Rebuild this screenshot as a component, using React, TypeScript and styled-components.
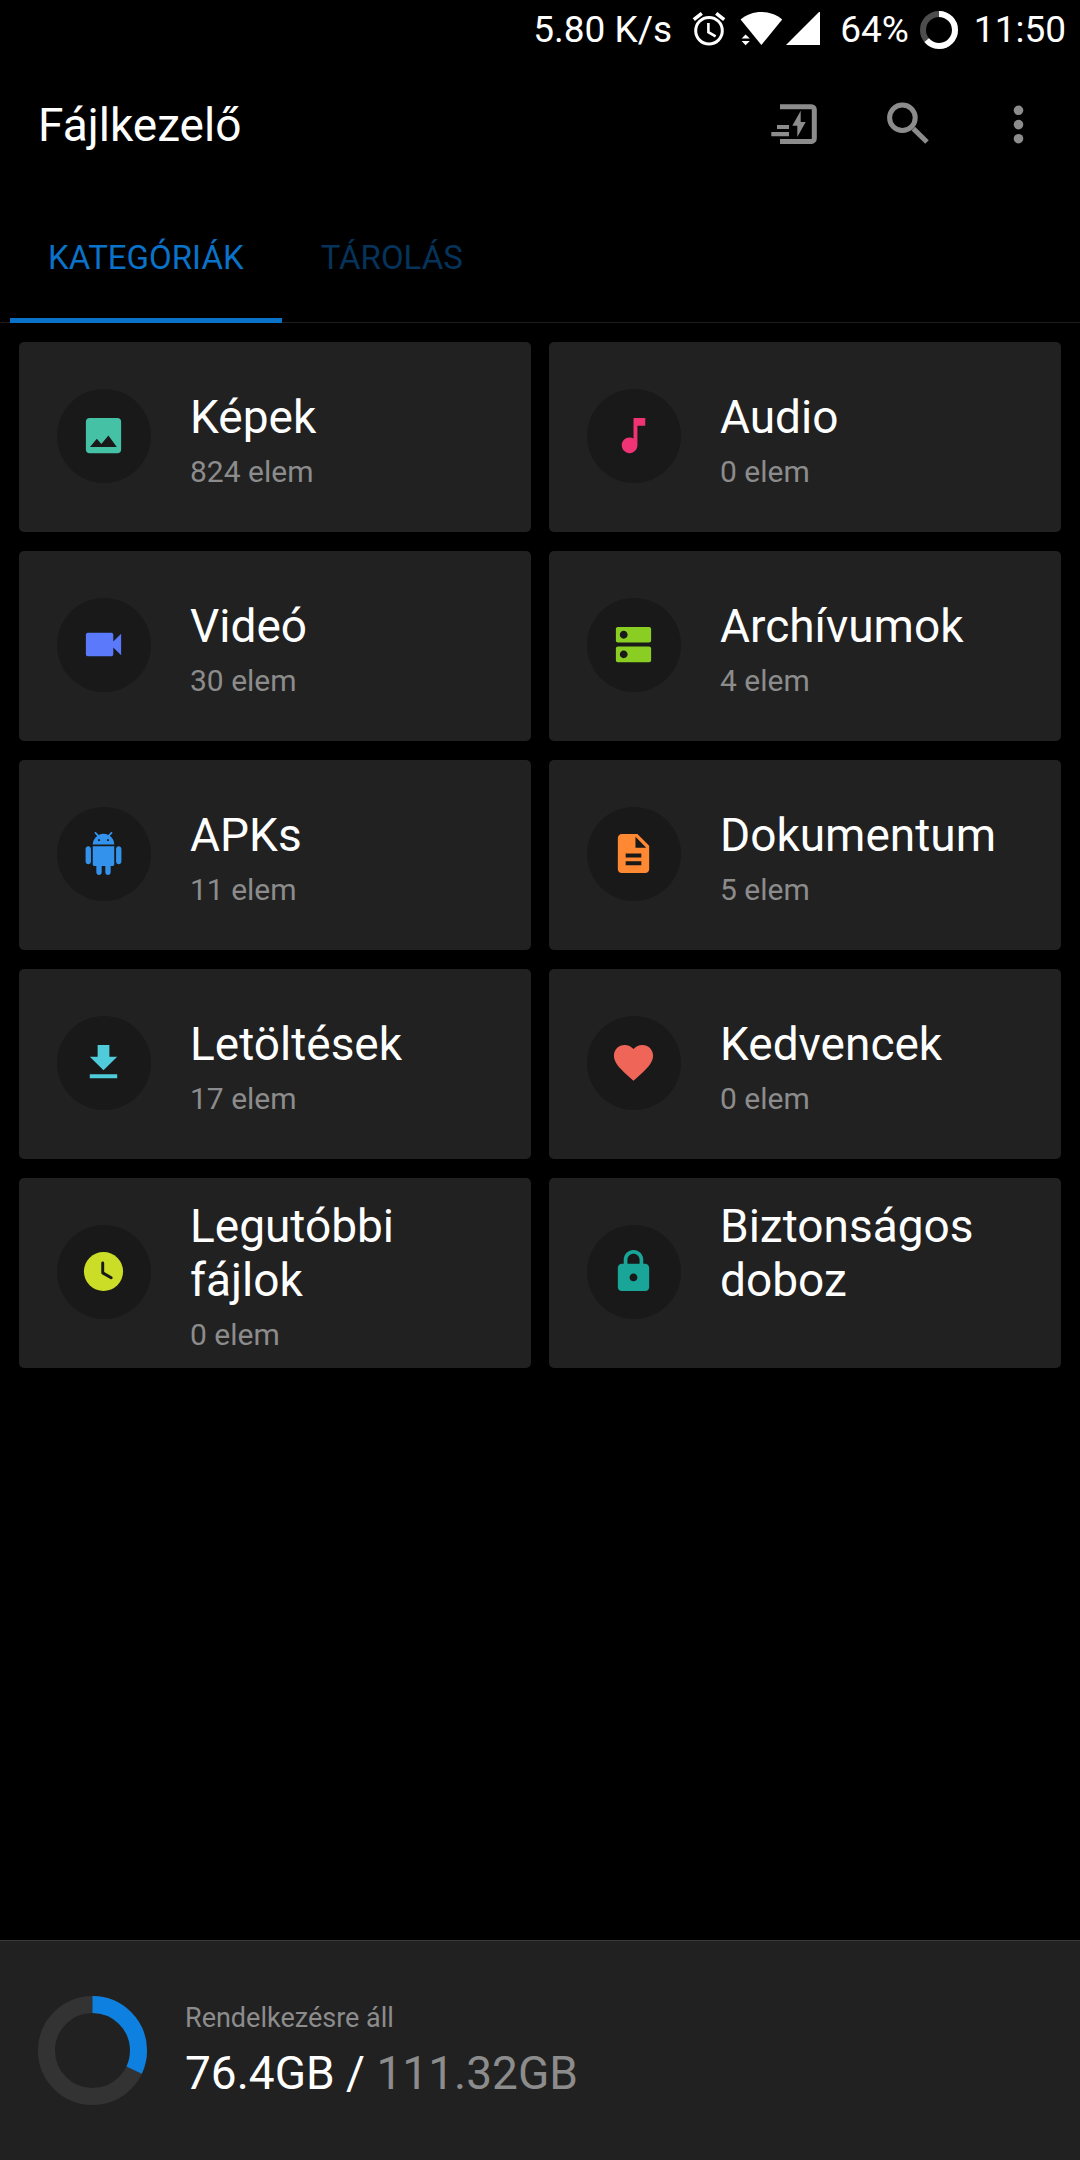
import React, { useState } from 'react';
import styled, { createGlobalStyle } from 'styled-components';

const GlobalStyle = createGlobalStyle`
  *, *::before, *::after { box-sizing: border-box; }
  html, body { margin: 0; background: #000; }
  body, button { font-family: Roboto, "Noto Sans", sans-serif; }
  button { margin: 0; padding: 0; border: 0; background: none; color: inherit; cursor: pointer; }
  svg { display: block; flex: none; }
`;

const Page = styled.div`
  display: flex;
  flex-direction: column;
  min-height: 100vh;
  background: #000;
  color: #fff;
`;

const StatusBar = styled.div`
  display: flex;
  align-items: center;
  justify-content: flex-end;
  height: 60px;
  padding-right: 14px;
  font-size: 37px;
  line-height: 44px;
`;

const StatusGroup = styled.div<{ $gap: number; $before: number }>`
  display: flex;
  align-items: center;
  gap: ${(p) => p.$gap}px;
  margin-left: ${(p) => p.$before}px;
`;

const Header = styled.header`
  display: flex;
  align-items: center;
  justify-content: space-between;
  height: 133px;
  padding: 0 5px 3px 38px;
`;

const Title = styled.h1`
  margin: 0;
  font-size: 46px;
  font-weight: 400;
  line-height: 54px;
`;

const Actions = styled.div`
  display: flex;
`;

const ActionButton = styled.button`
  display: flex;
  align-items: center;
  justify-content: center;
  width: 112px;
  height: 112px;
  color: #8c8c8c;
`;

const Tabs = styled.div`
  display: flex;
  gap: 1px;
  padding-left: 10px;
  box-shadow: inset 0 -1px #1c1c1c;
`;

const Tab = styled.button<{ $active: boolean }>`
  height: 130px;
  padding: 5px 38px 0;
  border-bottom: 5px solid ${(p) => (p.$active ? '#0a72c8' : 'transparent')};
  color: ${(p) => (p.$active ? '#0a72c8' : '#05335a')};
  font-size: 33px;
  line-height: 38px;
  text-transform: uppercase;
`;

const Grid = styled.main`
  display: grid;
  grid-template-columns: repeat(2, minmax(0, 1fr));
  gap: 19px 18px;
  padding: 19px;
`;

const Card = styled.button`
  display: flex;
  align-items: center;
  gap: 39px;
  min-height: 190px;
  padding: 0 38px;
  border-radius: 5px;
  background: #212121;
  text-align: left;
`;

const IconDisc = styled.span<{ $color: string }>`
  display: flex;
  flex: none;
  align-items: center;
  justify-content: center;
  width: 94px;
  height: 94px;
  margin-bottom: 2px;
  padding: 0 1px 1px 0;
  border-radius: 50%;
  background: #191919;
  color: ${(p) => p.$color};
`;

const CardText = styled.span`
  display: flex;
  flex-direction: column;
  gap: 12px;
  min-width: 0;
  padding-top: 4px;
`;

const CardTitle = styled.span`
  font-size: 46px;
  line-height: 54px;
`;

const CardCount = styled.span`
  min-height: 32px;
  color: #8c8c8c;
  font-size: 30px;
  line-height: 32px;
`;

const Storage = styled.footer`
  display: flex;
  align-items: center;
  gap: 38px;
  height: 220px;
  margin-top: auto;
  padding: 0 38px;
  border-top: 1px solid #3a3a3a;
  background: #212121;
`;

const StorageText = styled.div`
  display: flex;
  flex-direction: column;
  gap: 12px;
`;

const StorageLabel = styled.span`
  color: #8c8c8c;
  font-size: 27px;
  line-height: 32px;
`;

const StorageValue = styled.span`
  font-size: 46px;
  line-height: 54px;
`;

const Muted = styled.span`
  color: #8c8c8c;
`;

const AlarmIcon = () => (
  <svg width="34" height="36" viewBox="0 0 34 36" fill="none" stroke="#fff" strokeWidth="3" aria-hidden="true">
    <circle cx="17" cy="18.7" r="13.3" />
    <path d="M1.8 7.6L9.8 1.4M24.2 1.4l8 6.2" strokeWidth="3.6" />
    <path d="M16.4 11v9.2l7.2 4.2" strokeWidth="2.6" />
  </svg>
);

const WifiIcon = () => (
  <svg width="43" height="36" viewBox="0 0 43 36" fill="#fff" aria-hidden="true">
    <path d="M.6 7.4C6.4 2.6 13.500 0 21.400 0s15 2.600 20.800 7.400L21.400 33z" />
    <path d="M5.600 22.600l4.200 4H1.600zM1.600 29h8.200l-4.200 4.300z" />
  </svg>
);

const SignalIcon = () => (
  <svg width="34" height="36" viewBox="0 0 34 36" fill="#fff" aria-hidden="true">
    <path d="M34 -1V33H0z" />
  </svg>
);

/** Ring whose coloured arc starts at twelve o'clock and runs clockwise. */
function Ring(props: { size: number; stroke: number; value: number; color: string; track: string }) {
  const { size, stroke, value, color, track } = props;
  const c = size / 2;
  const r = (size - stroke) / 2;
  return (
    <svg width={size} height={size} viewBox={`0 0 ${size} ${size}`} fill="none" strokeWidth={stroke} aria-hidden="true">
      <circle cx={c} cy={c} r={r} stroke={track} />
      <circle
        cx={c}
        cy={c}
        r={r}
        stroke={color}
        pathLength={100}
        strokeDasharray={`${value} 100`}
        transform={`rotate(-90 ${c} ${c})`}
      />
    </svg>
  );
}

const TransferIcon = () => (
  <svg width="48" height="48" viewBox="0 1 48 48" fill="currentColor" aria-hidden="true">
    <path d="M9 6.800h31.500a2.800 2.800 0 0 1 2.800 2.800v29a2.800 2.800 0 0 1-2.800 2.800H9" fill="none" stroke="currentColor" strokeWidth="5" />
    <path d="M6 25h12v4H6zM.3 32H18v4.300H.3zM29.700 10.700V22h5l-8.400 15V25.700h-5z" />
  </svg>
);

const SearchIcon = () => (
  <svg width="48" height="48" viewBox="0 1 48 48" fill="none" stroke="currentColor" strokeWidth="5" aria-hidden="true">
    <circle cx="19.400" cy="17.700" r="12.800" />
    <path d="M30.300 28.600L44 42" />
  </svg>
);

const MoreIcon = () => (
  <svg width="48" height="48" viewBox="0 1 48 48" fill="currentColor" aria-hidden="true">
    <circle cx="23.500" cy="10.300" r="4.800" />
    <circle cx="23.500" cy="24.600" r="4.800" />
    <circle cx="23.500" cy="38.700" r="4.800" />
  </svg>
);

const ClockGlyph = () => (
  <>
    <circle cx="12" cy="12" r="10" />
    <path d="M11.600 7.600v5.100l4.300 2.500" fill="none" stroke="#191919" strokeWidth="1.500" strokeLinecap="round" strokeLinejoin="round" />
  </>
);

type Category = {
  title: string;
  count: string;
  color: string;
  size?: number;
  glyph: React.ReactNode;
};

const categories: Category[] = [
  {
    title: 'Képek',
    count: '824 elem',
    color: '#45c2a6',
    glyph: <path fillRule="evenodd" d="M5 3h14a2 2 0 0 1 2 2v14a2 2 0 0 1-2 2H5a2 2 0 0 1-2-2V5a2 2 0 0 1 2-2zM5.100 17.900h13.700L14.500 12l-3.600 4.400-2.300-2.800z" />,
  },
  {
    title: 'Audio',
    count: '0 elem',
    color: '#f03375',
    glyph: <path d="M12 3v10.550c-.59-.34-1.270-.55-2-.55-2.210 0-4 1.790-4 4s1.790 4 4 4 4-1.790 4-4V7h4V3h-6z" />,
  },
  {
    title: 'Videó',
    count: '30 elem',
    color: '#5a79fb',
    glyph: <path d="M17 10.500V7c0-.55-.45-1-1-1H4c-.55 0-1 .45-1 1v10c0 .55.45 1 1 1h12c.55 0 1-.45 1-1v-3.500l4 4v-11l-4 4z" />,
  },
  {
    title: 'Archívumok',
    count: '4 elem',
    color: '#8ace24',
    glyph: <path d="M20 13H4c-.55 0-1 .45-1 1v6c0 .55.45 1 1 1h16c.55 0 1-.45 1-1v-6c0-.55-.45-1-1-1zM7 19c-1.100 0-2-.9-2-2s.9-2 2-2 2 .9 2 2-.9 2-2 2zM20 3H4c-.55 0-1 .45-1 1v6c0 .55.45 1 1 1h16c.55 0 1-.45 1-1V4c0-.55-.45-1-1-1zM7 9c-1.100 0-2-.9-2-2s.9-2 2-2 2 .9 2 2-.9 2-2 2z" />,
  },
  {
    title: 'APKs',
    count: '11 elem',
    color: '#3292ec',
    size: 43,
    glyph: <path d="M6 18c0 .55.45 1 1 1h1v3.500c0 .83.67 1.500 1.500 1.500s1.500-.67 1.500-1.500V19h2v3.500c0 .83.67 1.500 1.500 1.500s1.500-.67 1.500-1.500V19h1c.55 0 1-.45 1-1V8H6v10zM3.500 8C2.670 8 2 8.670 2 9.500v7c0 .83.67 1.500 1.500 1.500S5 17.330 5 16.500v-7C5 8.670 4.330 8 3.500 8zm17 0c-.83 0-1.500.67-1.500 1.500v7c0 .83.67 1.500 1.500 1.500s1.500-.67 1.500-1.500v-7c0-.83-.67-1.500-1.500-1.500zm-4.970-5.840l1.300-1.300c.2-.2.2-.51 0-.71-.2-.2-.51-.2-.71 0l-1.480 1.480C13.850 1.230 12.950 1 12 1c-.96 0-1.860.23-2.660.63L7.850.15c-.2-.2-.51-.2-.71 0-.2.2-.2.51 0 .71l1.310 1.310C6.970 3.260 6 5.010 6 7h12c0-1.990-.97-3.750-2.470-4.840zM10 5H9V4h1v1zm5 0h-1V4h1v1z" />,
  },
  {
    title: 'Dokumentum',
    count: '5 elem',
    color: '#ff8833',
    glyph: <path d="M14 2H6c-1.100 0-1.990.9-1.990 2L4 20c0 1.100.89 2 1.990 2H18c1.100 0 2-.9 2-2V8l-6-6zm2 16H8v-2h8v2zm0-4H8v-2h8v2zm-3-5V3.500L18.500 9H13z" />,
  },
  {
    title: 'Letöltések',
    count: '17 elem',
    color: '#4fcbd9',
    glyph: <path d="M19 9h-4V3H9v6H5l7 7 7-7zM5 18v2h14v-2H5z" />,
  },
  {
    title: 'Kedvencek',
    count: '0 elem',
    color: '#ef6557',
    glyph: <path d="M12 21.350l-1.450-1.320C5.400 15.360 2 12.280 2 8.500 2 5.420 4.420 3 7.500 3c1.740 0 3.410.81 4.500 2.090C13.090 3.810 14.760 3 16.500 3 19.580 3 22 5.420 22 8.500c0 3.780-3.400 6.860-8.550 11.540L12 21.350z" />,
  },
  {
    title: 'Legutóbbi fájlok',
    count: '0 elem',
    color: '#cbdd26',
    glyph: <ClockGlyph />,
  },
  {
    title: 'Biztonságos doboz',
    count: '',
    color: '#19a597',
    glyph: <path d="M18 8h-1V6c0-2.760-2.240-5-5-5S7 3.240 7 6v2H6c-1.100 0-2 .9-2 2v10c0 1.100.9 2 2 2h12c1.100 0 2-.9 2-2V10c0-1.100-.9-2-2-2zm-6 9c-1.100 0-2-.9-2-2s.9-2 2-2 2 .9 2 2-.9 2-2 2zm3.100-9H8.900V6c0-1.710 1.390-3.100 3.100-3.100 1.710 0 3.100 1.390 3.100 3.100v2z" />,
  },
];

const tabs = ['Kategóriák', 'Tárolás'];

export default function App() {
  const [active, setActive] = useState(0);
  return (
    <Page>
      <GlobalStyle />
      <StatusBar>
        <span>5.80 K/s</span>
        <StatusGroup $gap={14} $before={20}>
          <AlarmIcon />
          <StatusGroup $gap={3} $before={0}>
            <WifiIcon />
            <SignalIcon />
          </StatusGroup>
        </StatusGroup>
        <StatusGroup $gap={11} $before={20}>
          <span>64%</span>
          <Ring size={38} stroke={6} value={64} color="#fff" track="#4d4d4d" />
        </StatusGroup>
        <StatusGroup $gap={0} $before={16}>
          <span>11:50</span>
        </StatusGroup>
      </StatusBar>

      <Header>
        <Title>Fájlkezelő</Title>
        <Actions>
          <ActionButton type="button" aria-label="Fájlátvitel">
            <TransferIcon />
          </ActionButton>
          <ActionButton type="button" aria-label="Keresés">
            <SearchIcon />
          </ActionButton>
          <ActionButton type="button" aria-label="További lehetőségek">
            <MoreIcon />
          </ActionButton>
        </Actions>
      </Header>

      <Tabs role="tablist">
        {tabs.map((name, i) => (
          <Tab key={name} type="button" role="tab" aria-selected={i === active} $active={i === active} onClick={() => setActive(i)}>
            {name}
          </Tab>
        ))}
      </Tabs>

      <Grid>
        {categories.map((c) => (
          <Card key={c.title} type="button">
            <IconDisc $color={c.color}>
              <svg width={c.size ?? 47} height={c.size ?? 47} viewBox="0 0 24 24" fill="currentColor" aria-hidden="true">
                {c.glyph}
              </svg>
            </IconDisc>
            <CardText>
              <CardTitle>{c.title}</CardTitle>
              <CardCount>{c.count}</CardCount>
            </CardText>
          </Card>
        ))}
      </Grid>

      <Storage>
        <Ring size={109} stroke={17} value={32} color="#0d80e0" track="#333333" />
        <StorageText>
          <StorageLabel>Rendelkezésre áll</StorageLabel>
          <StorageValue>
            76.4GB / <Muted>111.32GB</Muted>
          </StorageValue>
        </StorageText>
      </Storage>
    </Page>
  );
}
